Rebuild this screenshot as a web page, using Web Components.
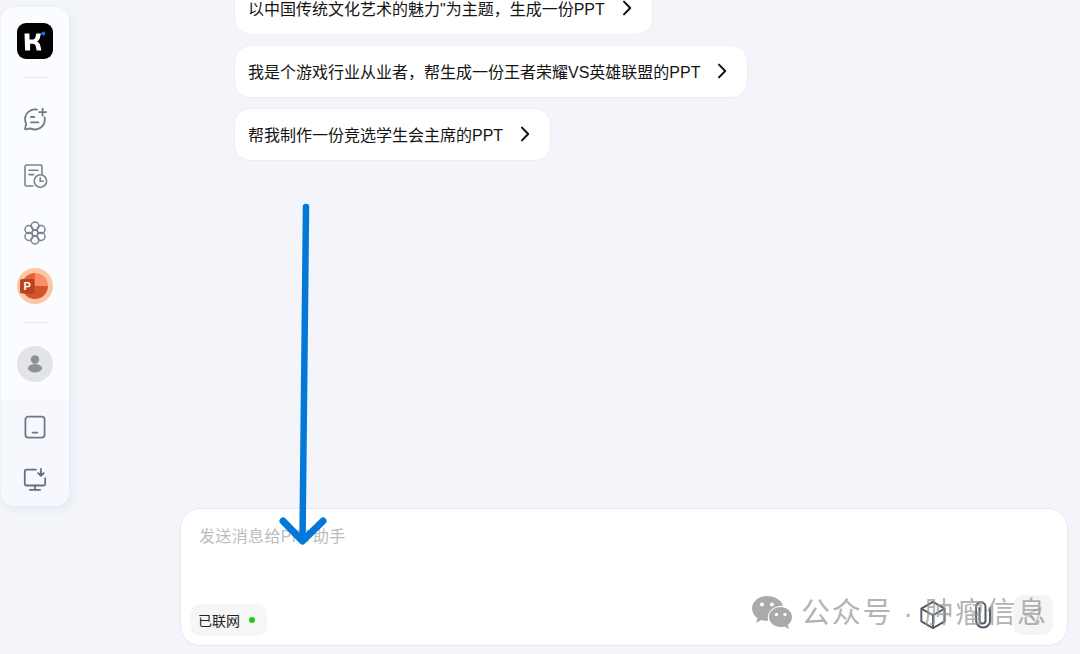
<!DOCTYPE html>
<html lang="zh">
<head>
<meta charset="utf-8">
<title>PPT助手</title>
<style>
	html, body { margin: 0; height: 100%; }
	body {
		background: #f3f5fa;
		font-family: "Liberation Sans", "Noto Sans CJK SC", sans-serif;
		overflow: hidden;
	}
</style>
</head>
<body>

<app-shell>
	<app-sidebar slot="side"></app-sidebar>
	<suggestion-list slot="main">
		<suggestion-card>以中国传统文化艺术的魅力"为主题，生成一份PPT</suggestion-card>
		<suggestion-card>我是个游戏行业从业者，帮生成一份王者荣耀VS英雄联盟的PPT</suggestion-card>
		<suggestion-card>帮我制作一份竞选学生会主席的PPT</suggestion-card>
	</suggestion-list>
	<chat-input slot="main" placeholder="发送消息给PPT助手"></chat-input>
	<note-arrow></note-arrow>
	<water-mark></water-mark>
</app-shell>

<script>
const icons = {
	chat: `<svg width="26" height="26" viewBox="0 0 26 26" fill="none" stroke="#707884" stroke-width="1.8" stroke-linecap="round" stroke-linejoin="round">
		<path d="M15 3.6a10 10 0 0 0-12 9.6c0 1.7.4 3.3 1.2 4.700L3 22.600c-.1.500.3.900.8.800l4.600-1a10 10 0 0 0 14.400-9 9 9 0 0 0-.2-2"/>
		<path d="M9 11h3.200M9 16.400h7.400M20.600 2.600v7M17.100 6.100h7"/></svg>`,
	history: `<svg width="26" height="26" viewBox="0 0 26 26" fill="none" stroke="#7a828e" stroke-width="1.6" stroke-linecap="round" stroke-linejoin="round">
		<path d="M11 23H4.600A1.600 1.600 0 0 1 3 21.400V3.600A1.600 1.600 0 0 1 4.600 2h13.800A1.600 1.600 0 0 1 20 3.600V11"/>
		<path d="M7 7.200h9M7 11.600h4.600"/><circle cx="18.400" cy="18" r="6.200"/><path d="M18.200 14.800v3.500h3"/></svg>`,
	flower: `<svg width="26" height="26" viewBox="0 0 26 26" fill="none" stroke="#7a828e" stroke-width="1.5">
		<circle cx="13" cy="6" r="3.900"/><circle cx="13" cy="20" r="3.900"/><circle cx="6.900" cy="9.500" r="3.900"/><circle cx="19.100" cy="9.500" r="3.900"/><circle cx="6.900" cy="16.500" r="3.900"/><circle cx="19.100" cy="16.500" r="3.900"/><circle cx="13" cy="13" r="3"/></svg>`,
	tablet: `<svg width="26" height="26" viewBox="0 0 26 26" fill="none" stroke="#707884" stroke-width="1.8" stroke-linecap="round">
		<rect x="3.400" y="2.600" width="19.200" height="21" rx="3"/><path d="M10.600 18.600h4.800"/></svg>`,
	desktop: `<svg width="26" height="26" viewBox="-1 -1 28 28" fill="none" stroke="#666e7a" stroke-width="1.900" stroke-linecap="round" stroke-linejoin="round">
		<path d="M14 3H3.600A1.600 1.600 0 0 0 2 4.600v13.800A1.600 1.600 0 0 0 3.600 20h18.800a1.600 1.600 0 0 0 1.600-1.600V12"/>
		<path d="M13 20v4.400M7.400 24.600h11.200M19.400 2v7"/><path d="M16.400 6.600l3 3 3-3" fill="#666e7a"/></svg>`,
	chevron: `<svg width="20" height="20" viewBox="0 0 20 20" fill="none" stroke="#111" stroke-width="2" stroke-linecap="round" stroke-linejoin="round"><path d="M7 3.600l6.200 6.400L7 16.400"/></svg>`,
	cube: `<svg width="28" height="28" viewBox="2 2 24 24" fill="none" stroke="#4f5a68" stroke-width="1.600" stroke-linejoin="round">
		<path d="M14 2.800l10 5.700v11L14 25.200 4 19.500v-11z"/><path d="M4 8.500L14 14.200l10-5.700M14 14.200v11"/></svg>`,
	clip: `<svg width="24" height="28" viewBox="0 1 24 28" fill="none" stroke="#4f5a68" stroke-width="2" stroke-linecap="round">
		<path d="M8.500 8v12.500a3 3 0 0 0 6 0V7a4.700 4.700 0 0 0-9.400 0v13.500a7 7 0 0 0 14 0V8"/></svg>`,
	send: `<svg width="24" height="24" viewBox="0 0 24 24" fill="none" stroke="#c9c9c9" stroke-width="1.800" stroke-linecap="round" stroke-linejoin="round">
		<path d="M4 12l16-7-5 15-3.400-6.200z"/></svg>`
};

class AppShell extends HTMLElement {
	constructor() {
		super();
		this.attachShadow({ mode: "open" }).innerHTML = `
		<style>
			:host {
				display: flex;
				position: relative;
				height: 654px;
				width: 1080px;
				overflow: hidden;
			}
			.side { padding: 7px 0 0 1px; flex: none; }
			.main {
				flex: 1;
				min-width: 0;
				display: flex;
				flex-direction: column;
				justify-content: space-between;
			}
		</style>
		<div class="side"><slot name="side"></slot></div>
		<div class="main"><slot name="main"></slot></div>
		<slot></slot>`;
	}
}

class AppSidebar extends HTMLElement {
	constructor() {
		super();
		this.attachShadow({ mode: "open" }).innerHTML = `
		<style>
			:host {
				display: flex;
				flex-direction: column;
				align-items: stretch;
				width: 68px;
				height: 499px;
				background: #fbfcff;
				border-radius: 14px;
				overflow: hidden;
				box-shadow: 2px 3px 10px rgba(170, 180, 205, .22);
			}
			.top {
				flex: 1;
				display: flex;
				flex-direction: column;
				align-items: center;
				padding-top: 16px;
			}
			.bottom {
				height: 106px;
				background: #f6f8fe;
				display: flex;
				flex-direction: column;
				align-items: center;
				padding-top: 14px;
				gap: 26px;
				box-sizing: border-box;
			}
			.logo { width: 36px; height: 36px; display: block; }
			hr {
				width: 26px;
				height: 1px;
				border: 0;
				margin: 0;
				background: #e9ebf0;
			}
			.first { margin-top: 18px; }
			.tools { display: flex; flex-direction: column; gap: 31px; margin-top: 28px; }
			.tools svg, .bottom svg { display: block; }
			.ppt { display: block; margin-top: 22px; }
			.second { margin-top: 18px; }
			.avatar { display: block; margin-top: 23px; }
		</style>
		<div class="top">
			<svg class="logo" viewBox="0 0 36 36">
				<rect width="36" height="36" rx="9" fill="#000"/>
				<path d="M7.500 10.500h5v6h2.600c1.800 0 3-1 3.400-2.600l.8-3.400h4.600l-1 4.200c-.4 1.700-1.300 3-2.800 3.800 1.700.8 2.800 2.200 3.200 4l1.100 5h-4.700l-.9-4.200c-.4-1.700-1.400-2.600-3.100-2.600h-2.600v6.800h-5z" fill="#fff"/>
				<circle cx="26.200" cy="10.500" r="2" fill="#0b76f0"/>
			</svg>
			<hr class="first">
			<div class="tools">
				${icons.chat}
				${icons.history}
				${icons.flower}
			</div>
			<svg class="ppt" width="36" height="36" viewBox="0 0 36 36">
				<circle cx="18" cy="18" r="18" fill="#fcc7a6"/>
				<path d="M18 5a13 13 0 0 1 13 13H18z" fill="#f98e68"/>
				<path d="M31 18a13 13 0 0 1-26 0z" fill="#d2532c"/>
				<path d="M18 5a13 13 0 0 0-13 13h13z" fill="#e6633a"/>
				<rect x="3" y="11" width="14.500" height="14.500" rx="2" fill="#b8431f"/>
				<text x="10.200" y="22.300" text-anchor="middle" font-family="Liberation Sans" font-size="11" font-weight="700" fill="#fff">P</text>
			</svg>
			<hr class="second">
			<svg class="avatar" width="36" height="36" viewBox="0 0 36 36">
				<circle cx="18" cy="18" r="18" fill="#e3e4e8"/>
				<circle cx="18" cy="13.500" r="4.200" fill="#8e9199"/>
				<ellipse cx="18" cy="22.300" rx="7" ry="4.200" fill="#8e9199"/>
			</svg>
		</div>
		<div class="bottom">
			${icons.tablet}
			${icons.desktop}
		</div>`;
	}
}

class SuggestionList extends HTMLElement {
	constructor() {
		super();
		this.attachShadow({ mode: "open" }).innerHTML = `
		<style>
			:host {
				display: flex;
				flex-direction: column;
				align-items: flex-start;
				gap: 10px;
				margin: -18px 0 0 165px;
			}
		</style>
		<slot></slot>`;
	}
}

class SuggestionCard extends HTMLElement {
	constructor() {
		super();
		this.attachShadow({ mode: "open" }).innerHTML = `
		<style>
			:host {
				display: flex;
				align-items: center;
				gap: 12px;
				height: 53px;
				box-sizing: border-box;
				padding: 0 15px 2px 13px;
				background: #fff;
				border: 1px solid #eceef4;
				border-radius: 16px;
				font-size: 16px;
				color: #141414;
				white-space: nowrap;
			}
			svg { display: block; flex: none; }
		</style>
		<slot></slot>${icons.chevron}`;
	}
}

class StatusPill extends HTMLElement {
	constructor() {
		super();
		this.attachShadow({ mode: "open" }).innerHTML = `
		<style>
			:host {
				display: flex;
				align-items: center;
				width: 77px;
				height: 32px;
				box-sizing: border-box;
				padding-left: 8px;
				background: #f6f6f6;
				border-radius: 10px;
				font-size: 14px;
				color: #222;
			}
			i {
				width: 6px;
				height: 6px;
				margin-left: 9px;
				border-radius: 50%;
				background: #1fc71f;
			}
		</style>
		<slot></slot><i></i>`;
	}
}

class ChatInput extends HTMLElement {
	constructor() {
		super();
		this.attachShadow({ mode: "open" }).innerHTML = `
		<style>
			:host {
				display: flex;
				flex-direction: column;
				justify-content: space-between;
				height: 138px;
				box-sizing: border-box;
				margin: 0 12px 8px 111px;
				padding: 18px 14px 10px 9px;
				background: #fff;
				border: 1px solid #e6e8ee;
				border-radius: 20px;
			}
			.ph {
				padding-left: 9px;
				font-size: 16px;
				line-height: 20px;
				letter-spacing: .35px;
				color: #bcbcbc;
			}
			.row { display: flex; align-items: center; height: 40px; }
			status-pill { margin-top: 10px; }
			.tools { margin-left: auto; display: flex; align-items: center; }
			.tools svg { display: block; }
			.cube { margin-right: 24px; }
			.clip { margin-right: 18px; display: flex; }
			.send {
				width: 40px;
				height: 40px;
				border-radius: 10px;
				background: #f5f5f5;
				display: flex;
				align-items: center;
				justify-content: center;
			}
		</style>
		<div class="ph"></div>
		<div class="row">
			<status-pill>已联网</status-pill>
			<div class="tools">
				<div class="cube">${icons.cube}</div>
				<div class="clip">${icons.clip}</div>
				<div class="send">${icons.send}</div>
			</div>
		</div>`;
		this.shadowRoot.querySelector(".ph").textContent = this.getAttribute("placeholder") ?? "";
	}
}

// annotation drawn over the screenshot
class NoteArrow extends HTMLElement {
	constructor() {
		super();
		this.attachShadow({ mode: "open" }).innerHTML = `
		<style>
			:host { position: absolute; left: 0; top: 0; pointer-events: none; }
			svg { display: block; }
		</style>
		<svg width="1080" height="654" fill="none" stroke="#0278d8" stroke-linecap="round" stroke-linejoin="round">
			<path d="M306 207L302.500 540" stroke-width="6.500"/>
			<path d="M283 521L302.500 541 323 521" stroke-width="7"/>
		</svg>`;
	}
}

class WaterMark extends HTMLElement {
	constructor() {
		super();
		this.attachShadow({ mode: "open" }).innerHTML = `
		<style>
			:host {
				position: absolute;
				left: 752px;
				top: 588px;
				display: flex;
				align-items: center;
				height: 44px;
				font-size: 29px;
				letter-spacing: 1.800px;
				color: rgba(150, 150, 150, .72);
				white-space: nowrap;
				pointer-events: none;
			}
			svg { display: block; margin-right: 9px; margin-top: 4px; }
		</style>
		<svg width="40" height="34" viewBox="0 0 40 34" fill="#aaaaaa">
			<path d="M15 1C7 1 0 6.500 0 13.500c0 4 2.200 7.300 5.500 9.700L4 28l5.500-3c1.800.5 3.600.8 5.500.8h1.200a11 11 0 0 1-.4-3c0-6.600 6.200-12 14-12h1.200C29.500 5 22.800 1 15 1z"/>
			<path d="M40 22c0-5.500-5.300-10-11.500-10S17 16.500 17 22s5.300 10 11.500 10c1.400 0 2.800-.2 4.100-.6L37 34l-1.200-4c2.500-2 4.200-4.800 4.200-8z"/>
			<g fill="#fff"><circle cx="10" cy="9.500" r="2"/><circle cx="20" cy="9.500" r="2"/><circle cx="24.500" cy="19.500" r="1.700"/><circle cx="33" cy="19.500" r="1.700"/></g>
		</svg>公众号 · 肿瘤信息`;
	}
}

customElements.define("app-shell", AppShell);
customElements.define("app-sidebar", AppSidebar);
customElements.define("suggestion-list", SuggestionList);
customElements.define("suggestion-card", SuggestionCard);
customElements.define("status-pill", StatusPill);
customElements.define("chat-input", ChatInput);
customElements.define("note-arrow", NoteArrow);
customElements.define("water-mark", WaterMark);
</script>
</body>
</html>
